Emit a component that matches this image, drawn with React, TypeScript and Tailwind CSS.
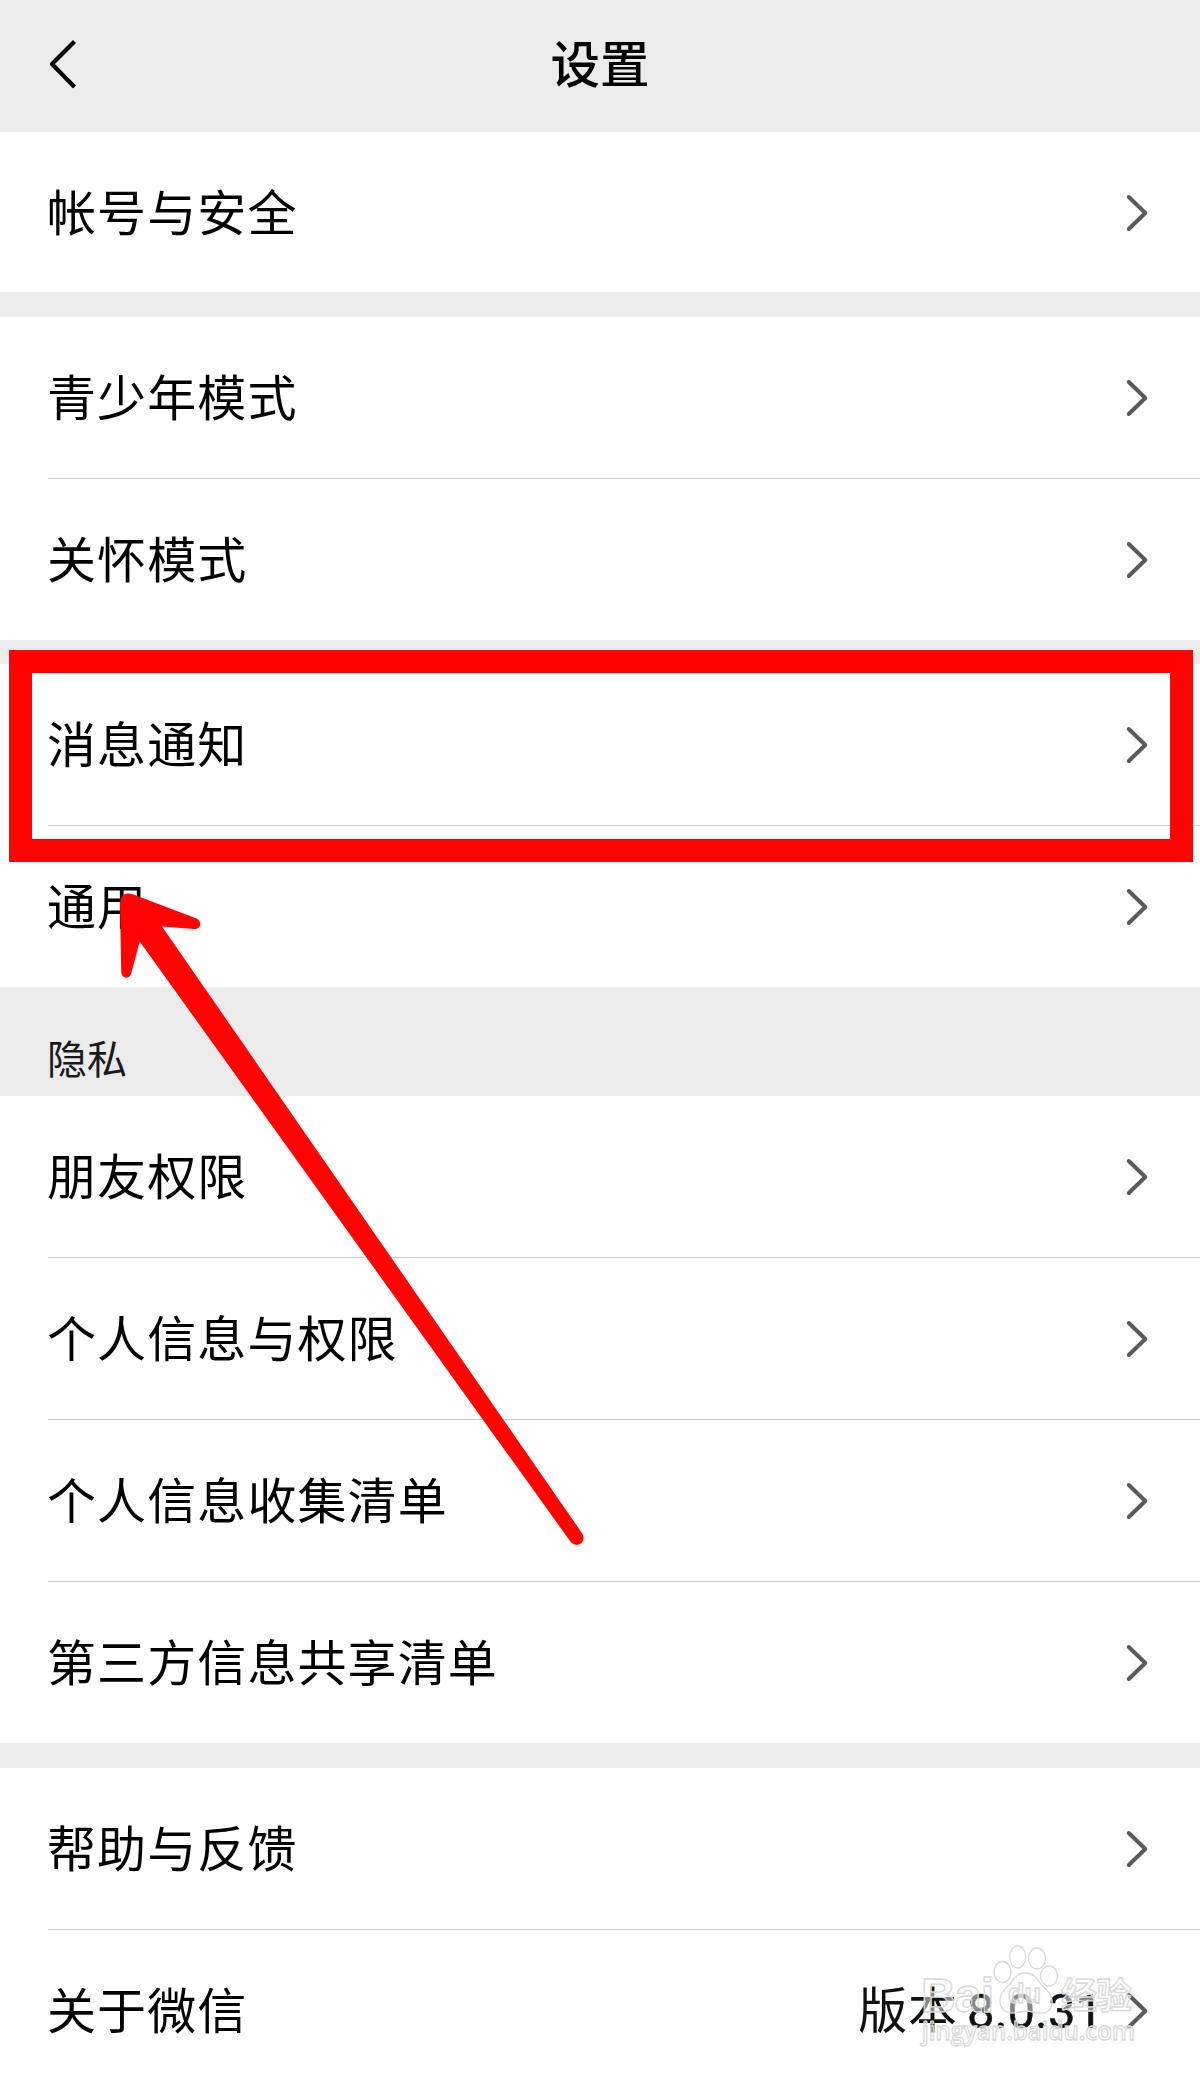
const FONT = "font-['Noto_Sans_CJK_SC',sans-serif]";

function Chevron() {
  return (
    <svg className="h-[40px] w-[24px] shrink-0" viewBox="0 0 24 40" fill="none">
      <path d="M3.800 4L20.300 20L3.800 36" stroke="#5a5a5a" strokeWidth="4" strokeLinecap="round" strokeLinejoin="round" />
    </svg>
  );
}

function Row({ label, version, divider }: { label: string; version?: string; divider?: boolean }) {
  return (
    <div className={divider ? 'h-[162px] bg-white pl-[48px]' : 'h-[161px] bg-white pl-[48px]'}>
      <div
        className={
          divider
            ? 'flex h-full items-center border-b border-[#cfcfcf] pr-[51px]'
            : 'flex h-full items-center pr-[51px]'
        }
      >
        <span className="-ml-px flex-1 pb-[7px] text-[49px] leading-none tracking-[1.1px] text-black">{label}</span>
        {version && (
          <span className="mr-[22px] flex items-baseline pb-[4px] text-[49px] leading-none text-[#111]">
            <span className="tracking-[0.9px]">版本</span>
            <span className="ml-[9px] font-['Roboto',sans-serif] [-webkit-text-stroke:0.5px_#111]">{version}</span>
          </span>
        )}
        <Chevron />
      </div>
    </div>
  );
}

function Arrow() {
  return (
    <svg className="absolute left-[110px] top-[880px] h-[680px] w-[490px]" viewBox="110 880 490 680">
      <path
        fill="#ff0202"
        d="M120 903Q120.500 893.500 128 893.500Q132 893.500 136 895.500L196.500 918.500C202.500 921.500 201 929.500 194 929L162 926.500L582.200 1533.500C587.500 1542 576 1549.500 570 1541L139.700 941.500L131.200 973.500C129 980 121.500 978.500 121.200 971.500Z"
      />
    </svg>
  );
}

function Watermark() {
  return (
    <svg className="absolute left-[900px] top-[1940px] h-[134px] w-[260px]" viewBox="900 1940 260 134">
      <g fill="#ffffff" fillOpacity="0.5" stroke="#d8d8d8" strokeWidth="1.3">
        <ellipse cx="1002.500" cy="1972" rx="8.500" ry="10.500" />
        <ellipse cx="1017.700" cy="1957" rx="8" ry="11" />
        <ellipse cx="1037" cy="1958.500" rx="8.500" ry="10.500" />
        <ellipse cx="1049" cy="1976" rx="8.500" ry="10" />
        <path d="M1025 1973C1017 1973 1014 1979 1010 1984C1005 1989 1000 1993 1000 2001C1000 2009 1006 2013 1013 2013C1018 2013 1021 2011 1026 2011C1032 2011 1035 2014 1041 2013C1049 2013 1053 2007 1052 2000C1051 1992 1045 1989 1040 1983C1036 1977 1033 1973 1025 1973Z" />
        <g className="font-['Liberation_Sans',sans-serif] font-bold">
          <text x="921" y="2012" fontSize="48" textLength="73">Bai</text>
          <text x="1008" y="2003" fontSize="27" textLength="33">du</text>
        </g>
        <text x="1061" y="2009" fontSize="36" textLength="71" className="font-['Noto_Sans_CJK_SC',sans-serif] font-bold">经验</text>
        <text x="922" y="2040" fontSize="26" textLength="213" lengthAdjust="spacingAndGlyphs" className="font-['Open_Sans',sans-serif] font-semibold">jingyan.baidu.com</text>
      </g>
    </svg>
  );
}

export default function App() {
  return (
    <div className={`relative h-[2074px] w-[1200px] overflow-hidden bg-[#ebebeb] ${FONT}`}>
      <header className="grid h-[132px] grid-cols-3 items-center pb-[4px]">
        <svg className="ml-[48px] h-[52px] w-[30px]" viewBox="0 0 30 52" fill="none">
          <path d="M26.500 3.500L4 26L26.500 49" stroke="#000" strokeWidth="4.2" strokeLinejoin="round" />
        </svg>
        <h1 className="pb-[4px] text-center text-[49.5px] font-medium leading-none text-black">设置</h1>
      </header>
      <main>
        <section className="h-[160px] overflow-hidden">
          <Row label="帐号与安全" />
        </section>
        <section className="mt-[25px]">
          <Row label="青少年模式" divider />
          <Row label="关怀模式" />
        </section>
        <section className="mt-[24px]">
          <Row label="消息通知" divider />
          <Row label="通用" />
        </section>
        <h2 className="flex h-[109px] items-end pb-[19px] pl-[47px] text-[40px] leading-none text-[#1a1a1a]">隐私</h2>
        <section>
          <Row label="朋友权限" divider />
          <Row label="个人信息与权限" divider />
          <Row label="个人信息收集清单" divider />
          <Row label="第三方信息共享清单" />
        </section>
        <section className="mt-[25px]">
          <Row label="帮助与反馈" divider />
          <Row label="关于微信" version="8.0.31" />
        </section>
      </main>
      <div className="absolute left-[9px] top-[650px] h-[212px] w-[1184px] border-[23px] border-[#ff0202]" />
      <Arrow />
      <Watermark />
    </div>
  );
}
